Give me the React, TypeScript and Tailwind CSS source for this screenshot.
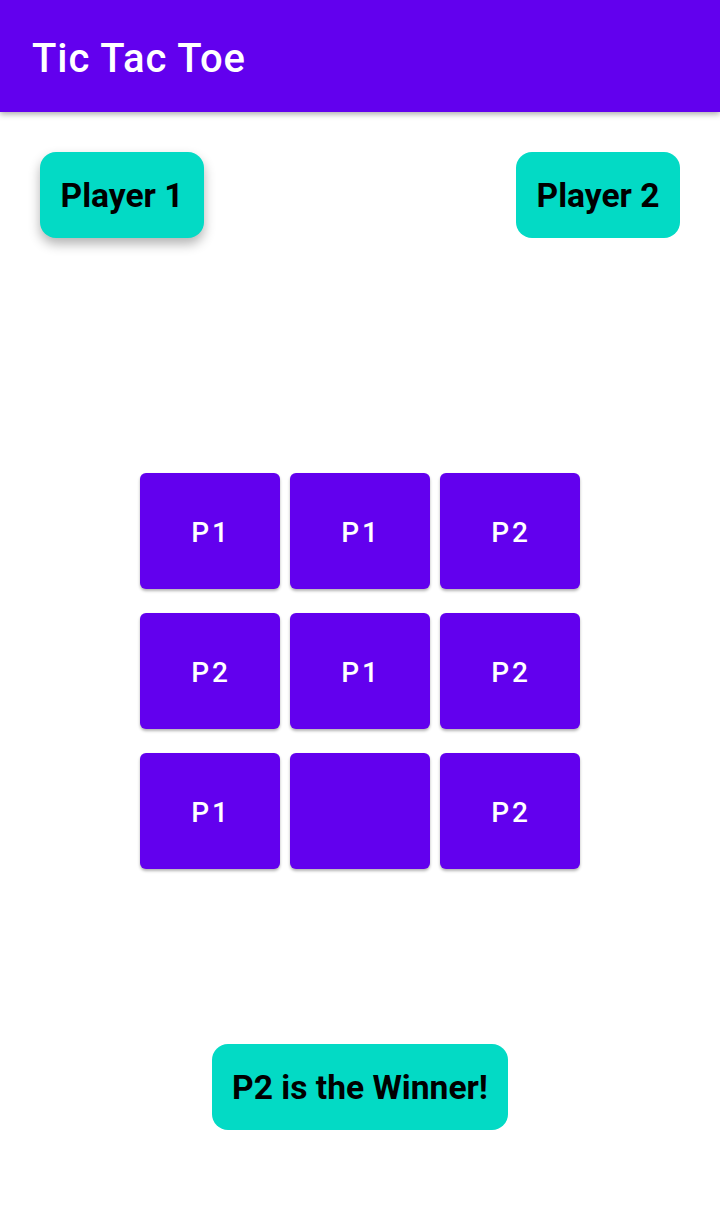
const board = [
  ['P1', 'P1', 'P2'],
  ['P2', 'P1', 'P2'],
  ['P1', '', 'P2'],
];

export default function App() {
  return (
    <div className="min-h-[1230px] bg-white font-['Roboto',sans-serif]">
      <header className="h-[112px] bg-[#6200EE] flex items-center px-8 pt-[6px] shadow-[0_2px_6px_rgba(0,0,0,0.35)]">
        <h1 className="text-[40px] font-medium text-white tracking-[0.95px]">Tic Tac Toe</h1>
      </header>

      <div className="flex justify-between px-10 mt-10">
        <button className="w-[164px] h-[86px] pt-[2px] rounded-2xl bg-[#03DAC5] text-black text-[33.6px] font-bold shadow-[0_6px_12px_rgba(0,0,0,0.3)]">
          Player 1
        </button>
        <button className="w-[164px] h-[86px] pt-[2px] rounded-2xl bg-[#03DAC5] text-black text-[33.6px] font-bold">
          Player 2
        </button>
      </div>

      <div className="mt-[235px] flex flex-col items-center gap-6">
        {board.map((row, i) => (
          <div key={i} className="flex gap-[10px]">
            {row.map((cell, j) => (
              <button
                key={j}
                className="w-[140px] h-[116px] pt-[4px] pl-[2px] rounded-md bg-[#6200EE] text-white text-[28px] font-medium tracking-[2.8px] shadow-[0_2px_3px_rgba(0,0,0,0.3)]"
              >
                {cell}
              </button>
            ))}
          </div>
        ))}
      </div>

      <div className="mt-[175px] flex justify-center">
        <button className="w-[296px] h-[86px] pt-[2px] rounded-2xl bg-[#03DAC5] text-black text-[33.6px] font-bold">
          P2 is the Winner!
        </button>
      </div>
    </div>
  );
}
